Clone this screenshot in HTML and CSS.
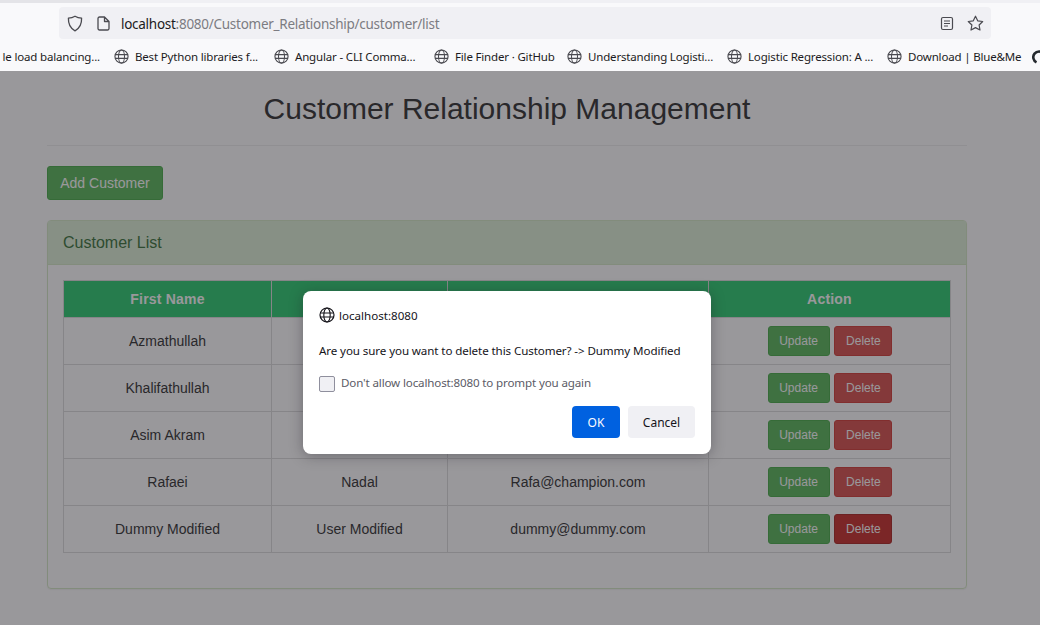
FILE: index.html
```html
<!DOCTYPE html>
<html lang="en">
<head>
    <meta charset="UTF-8">
    <title>Customer List</title>
    <link rel="stylesheet" href="styles.css">
</head>
<body>
    <svg class="icon-defs" width="0" height="0">
        <symbol id="globe" viewBox="0 0 16 16">
            <circle cx="8" cy="8" r="7" fill="none" stroke="currentColor" stroke-width="1.2"/>
            <ellipse cx="8" cy="8" rx="3.2" ry="7" fill="none" stroke="currentColor" stroke-width="1.1"/>
            <path d="M1 6h14M1 10h14" fill="none" stroke="currentColor" stroke-width="1.1"/>
        </symbol>
    </svg>

    <div class="tab-strip"></div>

    <div class="nav-bar">
        <div class="url-bar">
            <svg class="url-icon" width="16" height="17" viewBox="0 0 16 17"><path d="M8 1.2c2 1.2 4.2 1.8 6.6 1.9.2 5.800-1.800 10.300-6.600 12.700C3.200 13.400 1.200 8.900 1.400 3.100 3.800 3 6 2.400 8 1.200z" fill="none" stroke="#4a4a50" stroke-width="1.3" stroke-linejoin="round"/></svg>
            <svg class="url-icon page-icon" width="13" height="15" viewBox="0 0 13 15"><path d="M2.500 1h5l4.500 4.500V12.500a1.500 1.500 0 0 1-1.500 1.500h-8A1.500 1.500 0 0 1 1 12.500v-10A1.500 1.500 0 0 1 2.500 1zM7.500 1v4.500H12" fill="none" stroke="#4a4a50" stroke-width="1.300" stroke-linejoin="round"/></svg>
            <span class="url-text"><span class="url-host">localhost</span>:8080/Customer_Relationship/customer/list</span>
            <svg class="url-icon reader-icon" width="14" height="15" viewBox="0 0 14 15"><rect x="1.500" y="1.500" width="11" height="12" rx="1.500" fill="none" stroke="#4a4a50" stroke-width="1.200"/><path d="M4 5h6M4 7.500h6M4 10h4" stroke="#4a4a50" stroke-width="1.100"/></svg>
            <svg class="url-icon star-icon" width="17" height="16" viewBox="0 0 17 16"><path d="M8.500 1.200l2.200 4.600 5 .7-3.600 3.500.9 5-4.500-2.400L4 15l.9-5L1.300 6.500l5-.7z" fill="none" stroke="#4a4a50" stroke-width="1.200" stroke-linejoin="round"/></svg>
        </div>
    </div>

    <div class="bookmarks">
        <div class="bookmark bookmark-cut"><span>le load balancing...</span></div>
        <div class="bookmark"><svg class="globe"><use href="#globe"/></svg><span>Best Python libraries f...</span></div>
        <div class="bookmark"><svg class="globe"><use href="#globe"/></svg><span>Angular - CLI Comma...</span></div>
        <div class="bookmark"><svg class="globe"><use href="#globe"/></svg><span>File Finder · GitHub</span></div>
        <div class="bookmark"><svg class="globe"><use href="#globe"/></svg><span>Understanding Logisti...</span></div>
        <div class="bookmark"><svg class="globe"><use href="#globe"/></svg><span>Logistic Regression: A ...</span></div>
        <div class="bookmark"><svg class="globe"><use href="#globe"/></svg><span>Download | Blue&amp;Me</span></div>
        <div class="bookmark"><svg class="github-icon" width="14" height="14" viewBox="0 0 14 14"><path d="M4.500 12.300A5.700 5.700 0 1 1 9.500 12.300" fill="none" stroke="#24292e" stroke-width="2.600"/></svg></div>
    </div>

    <div class="viewport">
        <div class="container">
            <h2 class="page-title">Customer Relationship Management</h2>
            <hr class="title-rule">
            <a class="btn btn-add">Add Customer</a>

            <div class="panel">
                <div class="panel-heading">Customer List</div>
                <div class="panel-body">
                    <table class="customer-table">
                        <thead>
                            <tr>
                                <th class="col-first">First Name</th>
                                <th class="col-last">Last Name</th>
                                <th class="col-email">Email</th>
                                <th>Action</th>
                            </tr>
                        </thead>
                        <tbody>
                            <tr>
                                <td>Azmathullah</td>
                                <td></td>
                                <td></td>
                                <td><a class="btn btn-small btn-update">Update</a> <a class="btn btn-small btn-delete">Delete</a></td>
                            </tr>
                            <tr>
                                <td>Khalifathullah</td>
                                <td></td>
                                <td></td>
                                <td><a class="btn btn-small btn-update">Update</a> <a class="btn btn-small btn-delete">Delete</a></td>
                            </tr>
                            <tr>
                                <td>Asim Akram</td>
                                <td></td>
                                <td></td>
                                <td><a class="btn btn-small btn-update">Update</a> <a class="btn btn-small btn-delete">Delete</a></td>
                            </tr>
                            <tr>
                                <td>Rafaei</td>
                                <td>Nadal</td>
                                <td>Rafa@champion.com</td>
                                <td><a class="btn btn-small btn-update">Update</a> <a class="btn btn-small btn-delete">Delete</a></td>
                            </tr>
                            <tr>
                                <td>Dummy Modified</td>
                                <td>User Modified</td>
                                <td>dummy@dummy.com</td>
                                <td><a class="btn btn-small btn-update">Update</a> <a class="btn btn-small btn-delete btn-delete-active">Delete</a></td>
                            </tr>
                        </tbody>
                    </table>
                </div>
            </div>
        </div>

        <div class="overlay"></div>

        <div class="dialog">
            <div class="dialog-origin"><svg class="dialog-globe"><use href="#globe"/></svg>localhost:8080</div>
            <div class="dialog-message">Are you sure you want to delete this Customer? -&gt; Dummy Modified</div>
            <label class="dialog-check"><span class="check-box"></span><span class="check-text">Don't allow localhost:8080 to prompt you again</span></label>
            <div class="dialog-buttons">
                <button class="dialog-btn dialog-ok">OK</button>
                <button class="dialog-btn dialog-cancel">Cancel</button>
            </div>
        </div>
    </div>
</body>
</html>
```

FILE: styles.css
```css
html, body {
    margin: 0;
    height: 625px;
    overflow: hidden;
}
body {
    font-family: "Liberation Sans", Arial, sans-serif;
    background-color: #f9f9fb;
}
.icon-defs {
    position: absolute;
}

/* browser chrome */
.tab-strip {
    height: 3px;
    background: linear-gradient(90deg, #e4e4e8 90px, #f0f0f4 90px);
}
.nav-bar {
    height: 36px;
    padding: 4px 49px 0 59px;
    box-sizing: border-box;
}
.url-bar {
    height: 32px;
    background-color: #f0f0f4;
    border-radius: 4px;
    display: flex;
    align-items: center;
    padding: 0 7px 0 8px;
    font-family: "Noto Sans", sans-serif;
    font-size: 13.500px;
    letter-spacing: -.27px;
    color: #7c7c82;
}
.url-icon {
    flex: none;
}
.page-icon {
    margin-left: 14px;
}
.url-text {
    margin-left: 11px;
    padding-top: 1px;
    flex: 1;
}
.url-host {
    color: #1c1b22;
}
.reader-icon {
    margin-right: 13px;
}
.bookmarks {
    height: 32px;
    padding-top: 3px;
    display: grid;
    grid-template-columns: 114px 160px 160px 133px 160px 160px 145px 8px;
    align-items: center;
    font-family: "Noto Sans", sans-serif;
    font-size: 11.500px;
    letter-spacing: -.17px;
    color: #1c1b22;
    white-space: nowrap;
    overflow: hidden;
    box-sizing: border-box;
}
.bookmark {
    display: flex;
    align-items: center;
    overflow: hidden;
}
.bookmark-cut {
    justify-content: flex-end;
    padding-right: 14px;
}
.globe {
    width: 15px;
    height: 15px;
    color: #4a4a50;
    margin-right: 6px;
    flex: none;
}
.github-icon {
    flex: none;
}

/* page */
.viewport {
    position: relative;
    height: 554px;
    background-color: #fff;
    color: #333;
    overflow: hidden;
}
.container {
    width: 920px;
    margin-left: 47px;
}
.page-title {
    margin: 0;
    padding-top: 21px;
    font-size: 30px;
    font-weight: 500;
    line-height: 33px;
    text-align: center;
}
.title-rule {
    margin: 20px 0 20px;
    border: 0;
    border-top: 1px solid #eee;
}
.btn {
    display: inline-block;
    box-sizing: border-box;
    color: #fff;
    border: 1px solid transparent;
    border-radius: 3px;
    text-align: center;
}
.btn-add {
    width: 116px;
    height: 34px;
    line-height: 32px;
    font-size: 14px;
    background-color: #5cb85c;
    border-color: #4cae4c;
}
.panel {
    margin-top: 20px;
    height: 369px;
    box-sizing: border-box;
    border: 1px solid #d6e9c6;
    border-radius: 4px;
    box-shadow: 0 1px 1px rgba(0, 0, 0, .05);
}
.panel-heading {
    height: 44px;
    box-sizing: border-box;
    padding-left: 15px;
    line-height: 43px;
    font-size: 16px;
    color: #3c763d;
    background-color: #dff0d8;
    border-bottom: 1px solid #d6e9c6;
}
.panel-body {
    padding: 15px 15px 0;
}
.customer-table {
    width: 888px;
    table-layout: fixed;
    border-collapse: collapse;
    font-size: 14px;
}
.col-first {
    width: 207px;
}
.col-last {
    width: 175px;
}
.col-email {
    width: 260px;
}
.customer-table th, .customer-table td {
    border: 1px solid #ddd;
    text-align: center;
    padding: 0;
}
.customer-table th {
    height: 36px;
    background-color: #2ecc71;
    color: #fff;
    font-weight: bold;
    letter-spacing: .2px;
}
.customer-table td {
    height: 46px;
}
.btn-small {
    width: 62px;
    height: 30px;
    line-height: 28px;
    font-size: 12px;
}
.btn-update {
    background-color: #5cb85c;
    border-color: #4cae4c;
}
.btn-delete {
    background-color: #d9534f;
    border-color: #d43f3a;
    width: 58px;
    margin-left: 1px;
    margin-right: -1px;
}
.btn-delete-active {
    background-color: #c9302c;
    border-color: #ac2925;
}

/* prompt */
.overlay {
    position: absolute;
    inset: 0;
    background-color: rgba(28, 27, 34, .45);
}
.dialog {
    position: absolute;
    left: 303px;
    top: 220px;
    width: 408px;
    height: 163px;
    box-sizing: border-box;
    padding: 16px;
    background-color: #fff;
    border-radius: 8px;
    box-shadow: 0 2px 14px rgba(28, 27, 34, .35);
    font-family: "Noto Sans", sans-serif;
    font-size: 11.600px;
    letter-spacing: -.1px;
    color: #15141a;
}
.dialog-origin {
    display: flex;
    align-items: center;
    height: 16px;
    letter-spacing: 0;
}
.dialog-globe {
    width: 16px;
    height: 16px;
    margin-right: 4px;
    color: #15141a;
}
.dialog-message {
    margin-top: 20px;
    height: 16px;
    line-height: 16px;
}
.dialog-check {
    margin-top: 16px;
    display: flex;
    align-items: center;
    color: #5b5b66;
    letter-spacing: -.15px;
}
.check-text {
    margin-bottom: 2px;
}
.check-box {
    width: 14px;
    height: 14px;
    margin-right: 6px;
    background-color: #f0f0f4;
    border: 1px solid #8f8f9d;
    border-radius: 2px;
}
.dialog-buttons {
    margin-top: 14px;
    display: flex;
    justify-content: flex-end;
    gap: 8px;
}
.dialog-btn {
    height: 32px;
    border: 0;
    border-radius: 4px;
    font-family: "Noto Sans", sans-serif;
    font-size: 12px;
    padding: 0;
}
.dialog-ok {
    width: 48px;
    background-color: #0061e0;
    color: #fbfbfe;
}
.dialog-cancel {
    width: 67px;
    background-color: #f0f0f4;
    color: #15141a;
}
```
